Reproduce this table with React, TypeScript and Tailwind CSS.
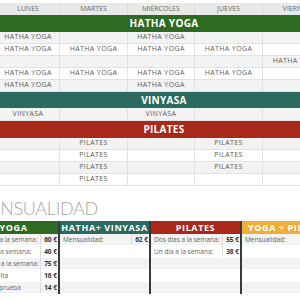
import React from "react";

const cols = ["LUNES", "MARTES", "MIÉRCOLES", "JUEVES", "VIERNES"];
const HY = "HATHA YOGA";
const hatha = [
  [HY, "", HY, "", ""],
  [HY, HY, HY, HY, ""],
  ["", "", "", "", HY],
  [HY, HY, HY, HY, ""],
  [HY, "", HY, "", ""],
];
const vinyasa = [["VINYASA", "", "VINYASA", "", ""]];
const pilates = [
  ["", "PILATES", "", "PILATES", ""],
  ["", "PILATES", "", "PILATES", ""],
  ["", "PILATES", "", "PILATES", ""],
  ["", "PILATES", "", "", ""],
];

const font = { fontFamily: "'Open Sans', 'Liberation Sans', sans-serif" };

function Rows({ rows, h = "h-[12px]" }: { rows: string[][]; h?: string }) {
  return (
    <>
      {rows.map((r, i) => (
        <div
          key={i}
          className={`grid grid-cols-[63px_68px_67px_68px_68px] ${h} border-b border-[#e2e2e2] ${
            i % 2 === 0 ? "bg-[#f3f3f3]" : "bg-white"
          }`}
        >
          {r.map((c, j) => (
            <div
              key={j}
              className="border-r border-[#e2e2e2] flex items-center justify-center text-[7px] text-[#5a5a5a] tracking-[0.4px] whitespace-nowrap"
            >
              {c}
            </div>
          ))}
        </div>
      ))}
    </>
  );
}

function Band({ title, color, h }: { title: string; color: string; h: string }) {
  return (
    <div
      className={`${h} ${color} flex items-center justify-center text-white font-bold text-[10px] tracking-[0.3px]`}
    >
      {title}
    </div>
  );
}

type Row = { label: string; price: string } | null;

function Card({
  title,
  color,
  rows,
  border = true,
}: {
  title: string;
  color: string;
  rows: Row[];
  border?: boolean;
}) {
  return (
    <div className={`w-[91px] shrink-0 flex flex-col ${border ? "border-r-2 border-[#3a3a3a]" : ""}`}>
      <div
        className={`h-[13px] ${color} flex items-center justify-center text-white font-bold text-[9px] tracking-[0.6px] whitespace-nowrap`}
      >
        {title}
      </div>
      {rows.map((r, i) => (
        <div
          key={i}
          className={`h-[12px] flex border-b border-white ${i % 2 === 0 ? "bg-[#f3f3f3]" : "bg-white"}`}
        >
          {r ? (
            <>
              <div className="flex-1 flex items-center pl-[3px] text-[6.5px] text-[#666] whitespace-nowrap overflow-hidden">
                {r.label}
              </div>
              <div className="w-[18px] border-l border-[#dcdcdc] flex items-center justify-end pr-[1px] text-[6.5px] font-bold text-[#333] whitespace-nowrap">
                {r.price}
              </div>
            </>
          ) : null}
        </div>
      ))}
    </div>
  );
}

export default function App() {
  return (
    <div className="w-[300px] h-[300px] overflow-hidden bg-white relative" style={font}>
      <div className="ml-[-3px] w-[334px] pt-[3px]">
        <div className="grid grid-cols-[63px_68px_67px_68px_68px] h-[12px] bg-[#e9e9e9]">
          {cols.map((c) => (
            <div
              key={c}
              className="border-r border-[#dadada] flex items-center justify-center text-[7px] text-[#6a6a6a]"
            >
              {c}
            </div>
          ))}
        </div>
        <Band title="HATHA YOGA" color="bg-[#2e6a22]" h="h-[17px]" />
        <Rows rows={hatha} />
        <Band title="VINYASA" color="bg-[#2b6a5f]" h="h-[16px]" />
        <Rows rows={vinyasa} h="h-[13px]" />
        <Band title="PILATES" color="bg-[#a8291a]" h="h-[17px]" />
        <Rows rows={pilates} />
      </div>
      <div
        className="ml-[-26px] mt-[13px] text-[18px] leading-[19px] font-light text-[#a8a8a8] tracking-[-0.3px] whitespace-nowrap"
        style={{ fontFamily: "Lato, 'Open Sans', sans-serif" }}
      >
        MENSUALIDAD
      </div>
      <div className="flex ml-[-31px] mt-[3px]">
        <Card
          title="YOGA"
          color="bg-[#2e6a22]"
          rows={[
            { label: "Dos días a la semana:", price: "60 €" },
            { label: "Un día a la semana:", price: "40 €" },
            { label: "Tres días a la semana:", price: "75 €" },
            { label: "Clase suelta", price: "16 €" },
            { label: "Clase de prueba", price: "14 €" },
          ]}
        />
        <Card
          title="HATHA+ VINYASA"
          color="bg-[#2b6a5f]"
          rows={[{ label: "Mensualidad:", price: "62 €" }, null, null, null, null]}
        />
        <Card
          title="PILATES"
          color="bg-[#a8291a]"
          rows={[
            { label: "Dos días a la semana:", price: "55 €" },
            { label: "Un día a la semana:", price: "38 €" },
            null,
            null,
            null,
          ]}
        />
        <Card
          title="YOGA + PILATES"
          color="bg-[#f0ad38]"
          border={false}
          rows={[{ label: "Mensualidad:", price: "70 €" }, null, null, null, null]}
        />
      </div>
    </div>
  );
}
